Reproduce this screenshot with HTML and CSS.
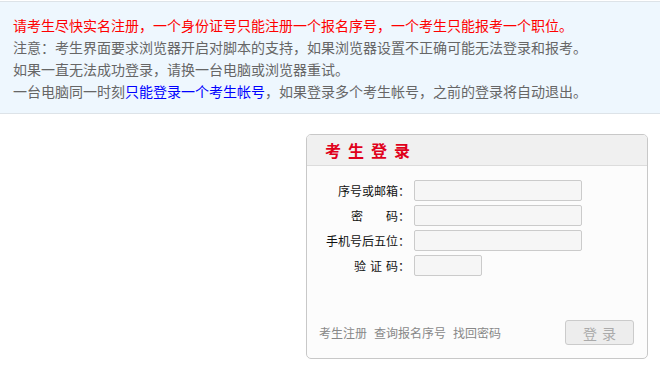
FILE: index.html
```html
<!DOCTYPE html>
<html>
<head>
    <meta charset="utf-8">
    <title>考生登录</title>
    <link rel="stylesheet" href="styles.css">
</head>
<body>
    <div class="notice">
        <p class="warn">请考生尽快实名注册，一个身份证号只能注册一个报名序号，一个考生只能报考一个职位。</p>
        <p>注意：考生界面要求浏览器开启对脚本的支持，如果浏览器设置不正确可能无法登录和报考。</p>
        <p>如果一直无法成功登录，请换一台电脑或浏览器重试。</p>
        <p>一台电脑同一时刻<span class="blue">只能登录一个考生帐号</span>，如果登录多个考生帐号，之前的登录将自动退出。</p>
    </div>

    <div class="wrap">
        <div class="login-box">
            <div class="login-head">
                <h2>考生登录</h2>
            </div>
            <form class="login-form">
                <label for="user">序号或邮箱：</label>
                <input type="text" id="user">

                <label for="pwd"><span class="wide">密</span>码：</label>
                <input type="password" id="pwd">

                <label for="phone">手机号后五位：</label>
                <input type="text" id="phone">

                <label for="code"><span class="mid">验证</span>码：</label>
                <input type="text" id="code" class="short">
            </form>
            <div class="login-foot">
                <div class="links">
                    <a href="#">考生注册</a>
                    <a href="#">查询报名序号</a>
                    <a href="#">找回密码</a>
                </div>
                <button type="button">登录</button>
            </div>
        </div>
    </div>
</body>
</html>
```

FILE: styles.css
```css
body {
    margin: 0;
    font-family: "Noto Sans CJK SC", "DejaVu Sans", sans-serif;
    background: #fff;
}
.notice {
    margin-top: 1px;
    padding: 12px 13px 11px;
    background-color: #eef7fe;
    border-top: 1px solid #dde3e8;
    border-bottom: 1px solid #dde3e8;
}
.notice p {
    margin: 0;
    font-size: 14px;
    line-height: 22px;
    color: #666;
    white-space: nowrap;
}
.notice .warn {
    color: #f00;
}
.notice .blue {
    color: #00f;
}
.wrap {
    display: flex;
    justify-content: flex-end;
    padding: 20px 12px 0 0;
}
.login-box {
    width: 340px;
    border: 1px solid #c8c8c8;
    border-radius: 5px;
    background-color: #fcfcfc;
    overflow: hidden;
}
.login-head {
    height: 30px;
    display: flex;
    align-items: center;
    padding-left: 18px;
    background-color: #f0f0f0;
    border-bottom: 1px solid #dcdcdc;
}
.login-head h2 {
    margin: 0;
    font-size: 16px;
    font-weight: bold;
    letter-spacing: 7px;
    color: #e0001b;
}
.login-form {
    display: grid;
    grid-template-columns: 103px auto;
    column-gap: 4px;
    row-gap: 4px;
    padding-top: 14px;
    justify-items: start;
}
.login-form label {
    justify-self: end;
    font-size: 12px;
    line-height: 21px;
    color: #111;
}
.login-form .wide {
    letter-spacing: 23px;
}
.login-form .mid {
    letter-spacing: 4px;
}
.login-form input {
    box-sizing: border-box;
    width: 168px;
    height: 21px;
    margin: 0;
    padding: 0 4px;
    background-color: #f6f6f6;
    border: 1px solid #cbcbcb;
    border-radius: 2px;
}
.login-form input.short {
    width: 68px;
}
.login-foot {
    display: flex;
    justify-content: space-between;
    align-items: center;
    margin-top: 44px;
    padding: 0 13px 13px 12px;
}
.links {
    display: flex;
    gap: 7px;
}
.links a {
    font-size: 12px;
    color: #888;
    text-decoration: none;
}
.login-foot button {
    width: 69px;
    height: 25px;
    padding: 0;
    background-color: #ededed;
    border: 1px solid #cbcbcb;
    border-radius: 3px;
    font-family: inherit;
    font-size: 14px;
    letter-spacing: 5px;
    text-indent: 5px;
    color: #aaa;
}
```
